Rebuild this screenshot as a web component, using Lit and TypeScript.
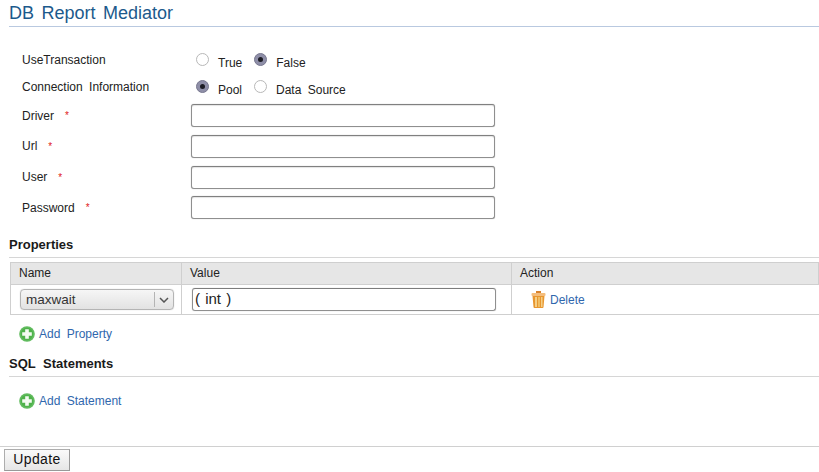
import { LitElement, html, css, svg } from 'lit';
import { customElement } from 'lit/decorators.js';

const addIcon = html`<svg class="icon" width="16" height="16" viewBox="0 0 16 16">
  <circle cx="8" cy="8" r="7.8" fill="#62bc5f"></circle>
  <circle cx="8" cy="8" r="6.2" fill="#4fb24b"></circle>
  <path d="M6.2 3.2h3.6v3h3v3.6h-3v3H6.2v-3h-3V6.2h3z" fill="#f4fbf2"></path>
</svg>`;

const trashIcon = html`<svg width="15" height="17" viewBox="0 0 15 17">
  ${svg`
    <rect x="5" y="0" width="5" height="2" fill="#d9822b"></rect>
    <rect x="0.5" y="2" width="14" height="3" rx="1" fill="#f4bd7c"></rect>
    <path d="M1.5 5h12l-1 11a1 1 0 0 1-1 1h-8a1 1 0 0 1-1-1z" fill="#e8962f"></path>
    <rect x="4" y="6" width="2" height="10" fill="#f5cf85"></rect>
    <rect x="7" y="6" width="2" height="10" fill="#efbd62"></rect>
    <rect x="10" y="6" width="1.5" height="10" fill="#f5cf85"></rect>
  `}
</svg>`;

@customElement('app-root')
export class AppRoot extends LitElement {
  static styles = css`
    :host {
      display: block;
      width: 819px;
      height: 472px;
      overflow: hidden;
      background: #fff;
      font-family: 'Liberation Sans', Arial, sans-serif;
      font-size: 12px;
      word-spacing: 3px;
      color: #222;
    }

    .title {
      margin: 0 0 0 9px;
      height: 26px;
      box-sizing: content-box;
      border-bottom: 1px solid #b9c9e0;
      font-size: 18px;
      font-weight: normal;
      line-height: 26px;
      word-spacing: 2.5px;
      color: #1c5a8c;
    }

    .form {
      display: grid;
      grid-template-columns: 169px 304px;
      grid-template-rows: 27px 27.5px repeat(4, 30.66px);
      padding: 19px 0 0 22px;
    }

    .label {
      display: flex;
      align-items: center;
      gap: 11px;
    }

    .label.choice {
      align-items: flex-start;
      padding-top: 7px;
      box-sizing: border-box;
    }

    .req {
      color: #e02020;
      font-size: 10px;
    }

    .radios {
      display: flex;
      padding-left: 5px;
      box-sizing: border-box;
    }

    .radio-opt {
      display: flex;
      align-items: flex-start;
      margin-right: 12px;
    }

    .radio-opt span.text {
      margin: 10px 0 0 9px;
    }

    .radio {
      width: 13px;
      height: 13px;
      margin-top: 7px;
      box-sizing: border-box;
      border: 1px solid #b8b8b8;
      border-radius: 50%;
      background: #fff;
      display: flex;
      align-items: center;
      justify-content: center;
    }

    .radio.on {
      background: #8f8fa8;
      border-color: #77778f;
    }

    .radio.on::after {
      content: '';
      width: 5px;
      height: 5px;
      border-radius: 50%;
      background: #1c1c24;
    }

    .input-row {
      display: flex;
      align-items: center;
    }

    .input {
      width: 304px;
      height: 23px;
      box-sizing: border-box;
      border: 1px solid #8f8f8f;
      border-top-color: #808080;
      border-radius: 3px;
      background: #fff;
      box-shadow: 0 0 1px #aaa, inset 0 1px 1px #e4e4e4;
    }

    .section {
      margin: 0 0 0 9px;
      font-size: 13px;
      font-weight: bold;
      color: #1a1a1a;
      height: 23px;
      line-height: 22px;
      word-spacing: 4px;
      box-sizing: content-box;
      border-bottom: 1px solid #d6d6d6;
    }

    .props {
      margin-top: 11px;
    }

    .table {
      display: grid;
      grid-template-columns: 171px 330px 1fr;
      margin: 4px 0 0 10px;
      border: 1px solid #cfcfcf;
      border-right: none;
    }

    .th {
      height: 21px;
      background: #e6e6e6;
      border-bottom: 1px solid #cfcfcf;
      border-right: 1px solid #cfcfcf;
      padding-left: 8px;
      line-height: 20px;
    }

    .td {
      height: 29px;
      border-right: 1px solid #cfcfcf;
      display: flex;
      align-items: center;
      padding-left: 9px;
    }

    .th:last-of-type,
    .td:last-of-type {
      border-right: none;
    }

    .select {
      width: 154px;
      height: 21px;
      box-sizing: border-box;
      border: 1px solid #b4b4b4;
      border-radius: 4px;
      background: linear-gradient(#f6f6f6, #e2e2e2);
      box-shadow: 0 0 1px #bbb;
      display: flex;
      align-items: center;
      font-size: 13.5px;
      padding-left: 5px;
      color: #333;
    }

    .select .val {
      flex: 1;
    }

    .select .arrow {
      width: 18px;
      height: 15px;
      border-left: 1px solid #b4b4b4;
      display: flex;
      align-items: center;
      justify-content: center;
    }

    .value-input {
      width: 304px;
      height: 23px;
      margin-left: 1px;
      box-sizing: border-box;
      border: 1px solid #8f8f8f;
      border-top-color: #7c7c7c;
      border-radius: 3px;
      box-shadow: 0 0 1px #aaa;
      font-size: 15px;
      line-height: 20px;
      padding-left: 2px;
      word-spacing: 1px;
      color: #222;
    }

    .link {
      display: flex;
      align-items: center;
      color: #2f67ad;
      gap: 4px;
    }

    .delete {
      margin-left: 10px;
      gap: 4px;
    }

    .add {
      margin: 11px 0 0 19px;
      height: 16px;
    }

    .sql {
      margin-top: 11px;
    }

    .add.statement {
      margin-top: 16px;
    }

    .footer {
      margin-top: 37px;
      border-top: 1px solid #d0d0d0;
      padding: 2px 0 0 4px;
    }

    .button {
      width: 66px;
      height: 22px;
      box-sizing: border-box;
      border: 1px solid #adadad;
      border-bottom-color: #999;
      border-right-color: #999;
      background: linear-gradient(#fafafa, #e6e6e6);
      font-family: inherit;
      font-size: 14px;
      letter-spacing: 0.4px;
      color: #111;
      padding: 0 0 2px;
    }
  `;

  private radio(label: string, on: boolean) {
    return html`<div class="radio-opt">
      <span class="radio ${on ? 'on' : ''}"></span><span class="text">${label}</span>
    </div>`;
  }

  private field(label: string) {
    return html`<div class="label">${label}<span class="req">*</span></div>
      <div class="input-row"><div class="input"></div></div>`;
  }

  render() {
    return html`
      <h2 class="title">DB Report Mediator</h2>

      <div class="form">
        <div class="label choice">UseTransaction</div>
        <div class="radios">${this.radio('True', false)}${this.radio('False', true)}</div>
        <div class="label choice">Connection Information</div>
        <div class="radios">${this.radio('Pool', true)}${this.radio('Data Source', false)}</div>
        ${this.field('Driver')}
        ${this.field('Url')}
        ${this.field('User')}
        ${this.field('Password')}
      </div>

      <h3 class="section props">Properties</h3>
      <div class="table">
        <div class="th">Name</div>
        <div class="th">Value</div>
        <div class="th">Action</div>
        <div class="td">
          <div class="select">
            <span class="val">maxwait</span>
            <span class="arrow">
              <svg width="10" height="6" viewBox="0 0 10 6"><path d="M1 1l4 4 4-4" fill="none" stroke="#555" stroke-width="1.5"></path></svg>
            </span>
          </div>
        </div>
        <div class="td"><div class="value-input">( int )</div></div>
        <div class="td"><span class="link delete">${trashIcon}Delete</span></div>
      </div>
      <div class="link add">${addIcon}Add Property</div>

      <h3 class="section sql">SQL Statements</h3>
      <div class="link add statement">${addIcon}Add Statement</div>

      <div class="footer"><button class="button">Update</button></div>
    `;
  }
}
